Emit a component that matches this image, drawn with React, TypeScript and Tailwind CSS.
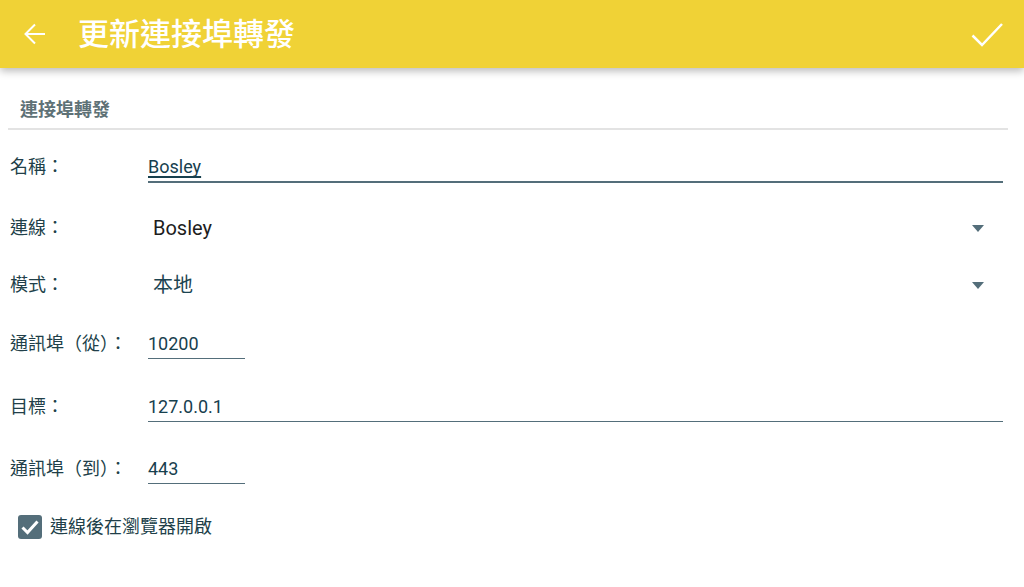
import React from "react";

const font = { fontFamily: '"Roboto", "Noto Sans CJK TC", sans-serif' };

function Caret() {
  return (
    <svg width="12" height="7" viewBox="0 0 12 7" className="shrink-0">
      <path d="M0 0h12L6 7z" fill="#546e7a" />
    </svg>
  );
}

function Label({ children }: { children: React.ReactNode }) {
  return <div className="w-[138px] shrink-0 text-[18px] leading-6 text-[#213f49]">{children}</div>;
}

export default function App() {
  return (
    <div className="h-[587px] w-[1024px] overflow-hidden bg-white" style={font}>
      <header className="relative z-10 flex h-[68px] items-center bg-[#f0d236] shadow-[0_3px_8px_rgba(0,0,0,0.28)]">
        <svg width="24" height="24" viewBox="0 0 24 24" className="ml-[23px]">
          <path d="M22 12H3M12 2.5L2.5 12 12 21.5" fill="none" stroke="white" strokeWidth="2" />
        </svg>
        <h1 className="ml-[31px] text-[31px] font-medium leading-none text-white">更新連接埠轉發</h1>
        <svg width="34" height="26" viewBox="0 0 34 26" className="ml-auto mr-[20px]">
          <path d="M2.5 14.5L12 24 32 3" fill="none" stroke="white" strokeWidth="2.5" />
        </svg>
      </header>

      <div className="pt-[30px]">
        <div className="pl-[20px] text-[18px] font-bold leading-6 text-[#5e7176]">連接埠轉發</div>
        <div className="mx-[8px] mt-[6px] h-[2px] w-[1000px] bg-[#e3e3e3]" />

        <div className="mt-[17px] flex h-[40px] items-center pl-[10px] pr-[21px]">
          <Label>名稱：</Label>
          <div className="flex-1 border-b-2 border-[#546e7a] pt-[4px] pb-[2px] text-[18px] leading-6 text-[#17404e]">
            <span className="underline decoration-[1.5px] underline-offset-[3px] [text-decoration-skip-ink:none]">Bosley</span>
          </div>
        </div>

        <div className="mt-[21px] flex h-[40px] items-center pl-[10px] pr-[40px]">
          <Label>連線：</Label>
          <div className="flex-1 pl-[5px] text-[20px] leading-6 text-[#1d1d1d]">Bosley</div>
          <Caret />
        </div>

        <div className="mt-[17px] flex h-[40px] items-center pl-[10px] pr-[40px]">
          <Label>模式：</Label>
          <div className="flex-1 pl-[5px] text-[20px] leading-6 text-[#1c4451]">本地</div>
          <Caret />
        </div>

        <div className="mt-[19px] flex h-[40px] items-center pl-[10px]">
          <Label>通訊埠（從）：</Label>
          <div className="w-[97px] border-b border-[#546e7a] pt-[3px] pb-[2px] text-[18px] leading-6 text-[#17404e]">
            10200
          </div>
        </div>

        <div className="mt-[23px] flex h-[40px] items-center pl-[10px] pr-[21px]">
          <Label>目標：</Label>
          <div className="flex-1 border-b border-[#546e7a] pt-[3px] pb-[2px] text-[18px] leading-6 text-[#17404e]">
            127.0.0.1
          </div>
        </div>

        <div className="mt-[22px] flex h-[40px] items-center pl-[10px]">
          <Label>通訊埠（到）：</Label>
          <div className="w-[97px] border-b border-[#546e7a] pt-[3px] pb-[2px] text-[18px] leading-6 text-[#17404e]">
            443
          </div>
        </div>

        <div className="mt-[18px] flex h-[40px] items-center pl-[18px]">
          <div className="flex h-[24px] w-[24px] items-center justify-center rounded-[3px] bg-[#546e7a]">
            <svg width="20" height="20" viewBox="0 0 20 20">
              <path d="M2.5 10.5L7.5 15.5 17.5 4.5" fill="none" stroke="white" strokeWidth="3" />
            </svg>
          </div>
          <div className="ml-[8px] text-[18px] leading-6 text-[#213f49]">連線後在瀏覽器開啟</div>
        </div>
      </div>
    </div>
  );
}
